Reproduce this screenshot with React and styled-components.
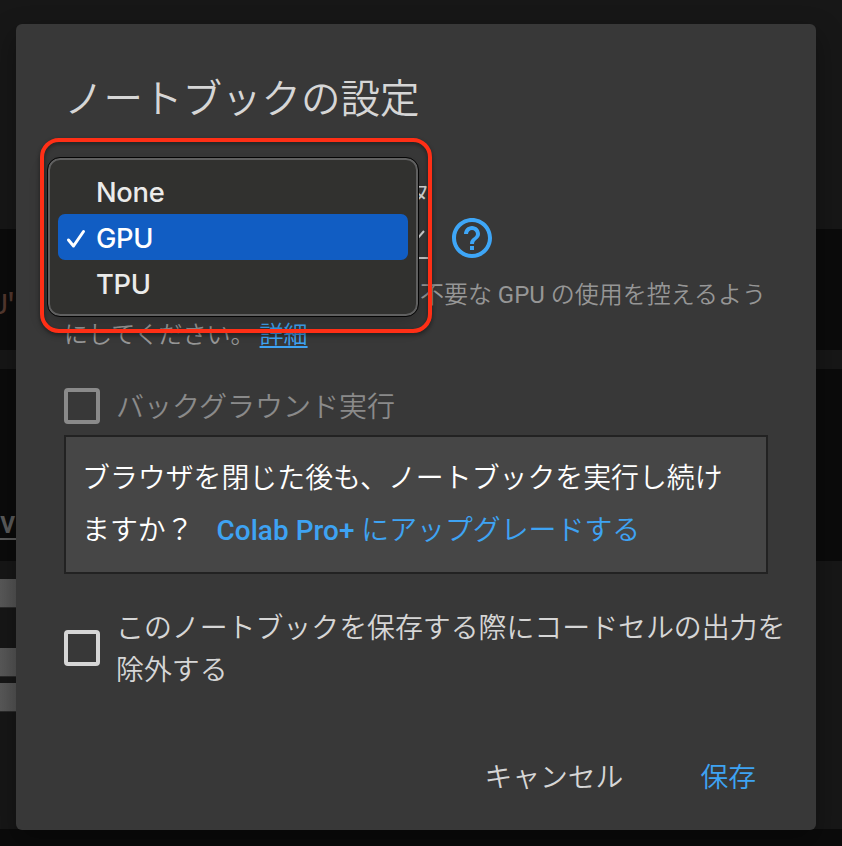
import React from 'react';
import styled, { createGlobalStyle } from 'styled-components';

const Global = createGlobalStyle`
  *, *::before, *::after { box-sizing: border-box; }
  html, body { margin: 0; background: #161616; overflow: hidden; }
  body { font-family: Roboto, "Noto Sans CJK JP", sans-serif; color: #d6d6d6; }
  h1, p { margin: 0; font-weight: 350; }
  button { background: none; border: 0; padding: 0; font: inherit; cursor: pointer; }
`;

const Screen = styled.div`
  position: relative;
  width: 842px;
  height: 846px;
  overflow: hidden;
`;

const Notebook = styled.div`
  display: grid;
  grid-template-rows: 229px 121px 19px 192px 268px 17px;
  height: 100%;
`;

const Band = styled.div`
  background: ${(p) => (p.$dark ? '#0b0b0b' : '#171717')};
  overflow: hidden;
`;

const CodeText = styled.div`
  width: 14px;
  height: 40px;
  margin-top: 57px;
  display: flex;
  justify-content: flex-end;
  font: 30px/40px "Liberation Mono", monospace;
  letter-spacing: -6px;
  color: #54392f;
  white-space: pre;
`;

const NotebookLink = styled.div`
  width: 16px;
  height: 36px;
  margin-top: 135px;
  font: 500 31px/38px Roboto, sans-serif;
  color: #5c5c5c;
  border-bottom: 2px solid #5c5c5c;
`;

const Field = styled.div`
  width: 16px;
  height: 28px;
  margin-top: ${(p) => p.$gap}px;
  background: linear-gradient(90deg, #5a5a5a, #555);
  box-shadow: 0 1px #2c2c2c;
`;

const Dialog = styled.section`
  position: absolute;
  left: 16px;
  top: 24px;
  width: 800px;
  height: 806px;
  padding: 47px 32px 0 48px;
  display: flex;
  flex-direction: column;
  border-radius: 6px;
  background: #383838;
  box-shadow: 0 12px 26px 4px rgba(0, 0, 0, 0.26);
  font-weight: 350;
`;

const Title = styled.h1`
  height: 58px;
  font-size: 39.5px;
  line-height: 58px;
  white-space: nowrap;
`;

const Accelerator = styled.div`
  height: 106px;
  margin-top: 35px;
  display: grid;
  grid-template-columns: 365px 1fr;
  grid-template-rows: 48px 47px;
  column-gap: 23px;
`;

const FieldLabel = styled.div`
  grid-column: 1 / -1;
  width: 366px;
  padding-top: 13px;
  text-align: right;
  font-size: 24px;
  line-height: 34px;
`;

const Select = styled.div`
  display: flex;
  justify-content: flex-end;
  align-items: center;
  padding-right: 4px;
  border-bottom: 2px solid #c5c5c5;
`;

const HelpIcon = styled.svg`
  width: 40px;
  height: 40px;
  margin-top: 6px;
  fill: #3ea6f7;
`;

const Hint = styled.div`
  height: 80px;
  margin-top: 5px;
  font-size: 24px;
  line-height: 40px;
  color: #969696;
  white-space: nowrap;
  div:first-child { padding-left: 356px; height: 40px; }
  b { font-weight: 400; }
`;

const Anchor = styled.a`
  color: #3ea3f3;
  text-decoration: ${(p) => (p.$plain ? 'none' : 'underline')};
  text-decoration-thickness: 2px;
  text-underline-offset: 3px;
  margin-left: ${(p) => p.$gap}px;
`;

const CheckRow = styled.label`
  display: flex;
  align-items: center;
  gap: 16px;
  height: ${(p) => p.$height}px;
  margin-top: ${(p) => p.$top}px;
  font-size: ${(p) => (p.$muted ? 28 : 27.9)}px;
  line-height: 42px;
  color: ${(p) => (p.$muted ? '#8a8a8a' : '#d6d6d6')};
  white-space: nowrap;
`;

const CheckText = styled.div`
  padding-top: 4px;
`;

const Box = styled.span`
  flex: none;
  width: 36px;
  height: 36px;
  border: 4px solid currentColor;
  border-radius: 4px;
`;

const Upgrade = styled.div`
  width: 704px;
  height: 139px;
  margin-top: 8px;
  padding: 16px;
  border: 2px solid #222;
  background: #464646;
  color: #fff;
  font-size: 27.9px;
  line-height: 52px;
  white-space: nowrap;
  b { font-weight: 500; letter-spacing: 0.05px; }
`;

const Actions = styled.div`
  display: flex;
  justify-content: flex-end;
  gap: 77px;
  margin: 64px 28px 0 0;
  font-size: 27.8px;
  line-height: 48px;
`;

const Action = styled.button`
  color: ${(p) => (p.$primary ? '#3ea3f3' : '#d6d6d6')};
`;

const Menu = styled.div`
  position: absolute;
  left: 48px;
  top: 158px;
  width: 370px;
  height: 158px;
  padding: 8px;
  border: 2px solid #606060;
  border-radius: 12px;
  outline: 1px solid #050505;
  background: #31312f;
  box-shadow: 0 8px 20px rgba(0, 0, 0, 0.2);
`;

const Option = styled.div`
  display: grid;
  grid-template-columns: 38px 1fr;
  align-items: center;
  height: 46px;
  margin-top: 0;
  border-radius: 7px;
  background: ${(p) => (p.$active ? '#115dc3' : 'transparent')};
  color: ${(p) => (p.$active ? '#fff' : '#ebebea')};
  font: 500 27.3px/46px Inter, sans-serif;
  letter-spacing: -0.3px;
  svg { width: 20px; height: 20px; margin: 4px 0 0 8px; }
  span { grid-column: 2; height: 46px; padding-top: 3px; line-height: 44px; }
`;

const Highlight = styled.div`
  position: absolute;
  left: 40px;
  top: 138px;
  width: 392px;
  height: 195px;
  border: 4px solid #ff2f16;
  border-radius: 19px;
  filter: drop-shadow(0 2px 2px rgba(0, 0, 0, 0.45));
`;

export default function App() {
  return (
    <Screen>
      <Global />
      <Notebook>
        <Band />
        <Band $dark><CodeText>U'</CodeText></Band>
        <Band />
        <Band $dark><NotebookLink>v</NotebookLink></Band>
        <Band>
          <Field $gap={18} />
          <Field $gap={41} />
          <Field $gap={7} />
        </Band>
        <Band $dark />
      </Notebook>

      <Dialog role="dialog">
        <Title>ノートブックの設定</Title>
        <Accelerator>
          <FieldLabel>ハードウェア アクセラレータ</FieldLabel>
          <Select>
            <svg width="14" height="10" viewBox="0 0 14 10" fill="none" stroke="#d0d0d0" strokeWidth="2">
              <path d="M1 1l6 7 6-7" />
            </svg>
          </Select>
          <HelpIcon viewBox="2 2 20 20">
            <path d="M11 18h2v-2h-2v2zm1-16C6.48 2 2 6.48 2 12s4.48 10 10 10 10-4.48 10-10S17.52 2 12 2zm0 18c-4.41 0-8-3.59-8-8s3.59-8 8-8 8 3.59 8 8-3.59 8-8 8zm0-14c-2.21 0-4 1.79-4 4h2c0-1.1.9-2 2-2s2 .9 2 2c0 2-3 1.75-3 5h2c0-2.25 3-2.5 3-5 0-2.21-1.79-4-4-4z" />
          </HelpIcon>
        </Accelerator>
        <Hint>
          <div>不要な <b>GPU</b> の使用を控えるよう</div>
          <div>にしてください。<Anchor $gap={5}>詳細</Anchor></div>
        </Hint>
        <CheckRow $height={42} $top={30} $muted>
          <Box />
          <CheckText>バックグラウンド実行</CheckText>
        </CheckRow>
        <Upgrade>
          <div>ブラウザを閉じた後も、ノートブックを実行し続け</div>
          <div>ますか？<Anchor $plain $gap={23}><b>Colab Pro+</b> にアップグレードする</Anchor></div>
        </Upgrade>
        <CheckRow $height={84} $top={32}>
          <Box />
          <CheckText>このノートブックを保存する際にコードセルの出力を<br />除外する</CheckText>
        </CheckRow>
        <Actions>
          <Action>キャンセル</Action>
          <Action $primary>保存</Action>
        </Actions>
      </Dialog>

      <Menu role="listbox">
        <Option><span>None</span></Option>
        <Option $active>
          <svg viewBox="0 0 20 20" fill="none" stroke="#fff" strokeWidth="3" strokeLinecap="round" strokeLinejoin="round">
            <path d="M2.5 11l5 6L17.5 2.5" />
          </svg>
          <span>GPU</span>
        </Option>
        <Option><span>TPU</span></Option>
      </Menu>
      <Highlight />
    </Screen>
  );
}
